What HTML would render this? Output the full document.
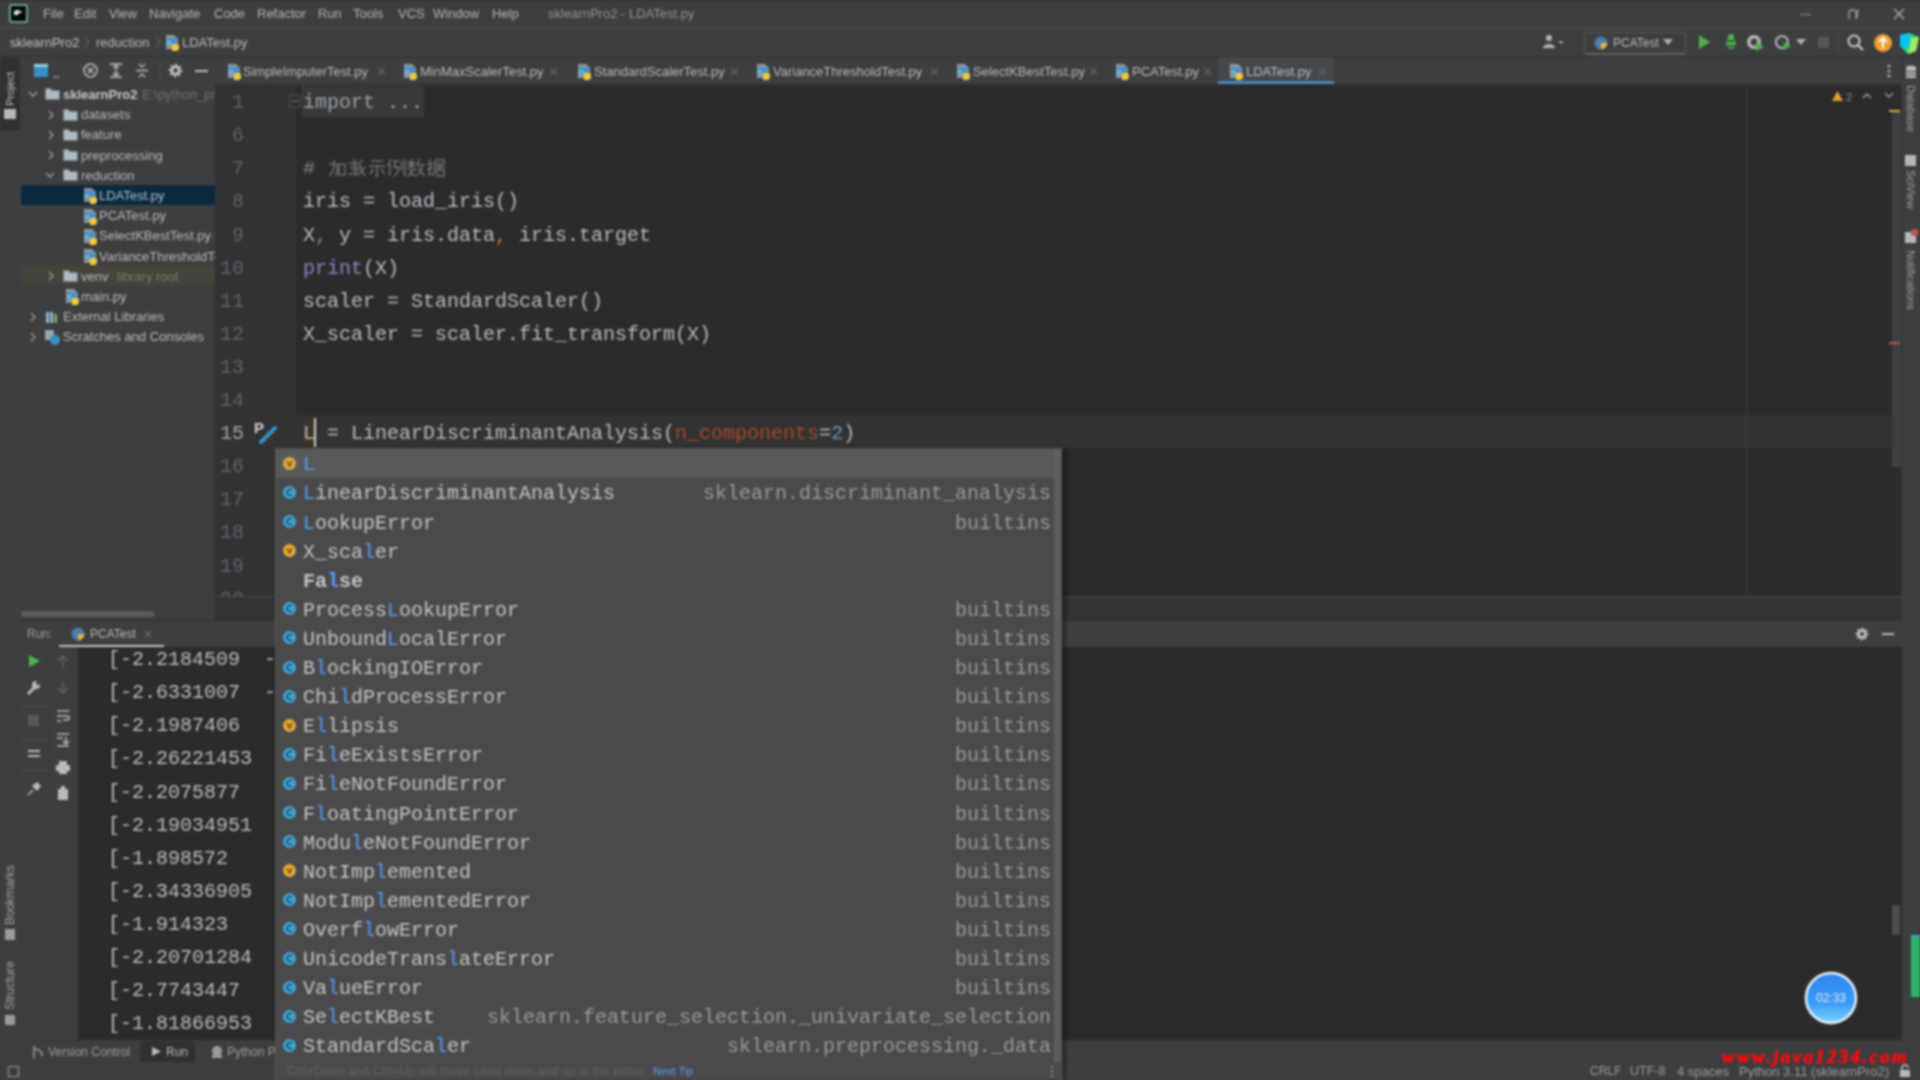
<!DOCTYPE html>
<html><head><meta charset="utf-8">
<style>
*{margin:0;padding:0;box-sizing:border-box}
html,body{width:1920px;height:1080px;overflow:hidden;background:#3d3e40;font-family:"Liberation Sans",sans-serif;color:#bbbbbb}
.a{position:absolute}
.t{white-space:pre}
#root{position:absolute;left:0;top:0;width:1920px;height:1080px;overflow:hidden;filter:blur(0.9px)}
</style></head><body><div id="root">
<div class="a" style="left:0px;top:0px;width:1920px;height:28px;background:#3d3e40;"></div><div class="a" style="left:0px;top:27px;width:1920px;height:2px;background:#48484a;"></div><div class="a" style="left:0px;top:0px;width:1920px;height:1px;background:#2e2e30;"></div><div class="a" style="left:0px;top:29px;width:1920px;height:27px;background:#3d3e40;"></div><div class="a" style="left:0px;top:56px;width:1920px;height:1px;background:#323232;"></div><div class="a" style="left:0px;top:57px;width:20px;height:1005px;background:#3d3e40;"></div><div class="a" style="left:0px;top:57px;width:20px;height:73px;background:#2f3031;"></div><div class="a" style="left:20px;top:57px;width:1px;height:1005px;background:#323232;"></div><div class="a" style="left:20px;top:57px;width:195px;height:563px;background:#3d3e40;"></div><div class="a" style="left:215px;top:57px;width:1687px;height:27px;background:#3d3e40;"></div><div class="a" style="left:215px;top:84px;width:1687px;height:1px;background:#323232;"></div><div class="a" style="left:215px;top:85px;width:81px;height:512px;background:#313234;"></div><div class="a" style="left:296px;top:85px;width:1606px;height:512px;background:#2b2b2b;"></div><div class="a" style="left:215px;top:597px;width:1687px;height:23px;background:#333335;"></div><div class="a" style="left:215px;top:596px;width:1687px;height:1px;background:#4a494d;"></div><div class="a" style="left:1902px;top:57px;width:18px;height:1005px;background:#3d3e40;"></div><div class="a" style="left:1901px;top:57px;width:1px;height:1005px;background:#323232;"></div><div class="a" style="left:20px;top:620px;width:1882px;height:1px;background:#333335;"></div><div class="a" style="left:20px;top:621px;width:1882px;height:26px;background:#3d3e40;"></div><div class="a" style="left:20px;top:647px;width:58px;height:393px;background:#3d3e40;"></div><div class="a" style="left:78px;top:647px;width:1824px;height:393px;background:#2b2b2b;"></div><div class="a" style="left:20px;top:1040px;width:1882px;height:1px;background:#393b3d;"></div><div class="a" style="left:20px;top:1041px;width:1882px;height:21px;background:#3d3e40;"></div><div class="a" style="left:0px;top:1062px;width:1920px;height:1px;background:#393b3d;"></div><div class="a" style="left:0px;top:1063px;width:1920px;height:17px;background:#3d3e40;"></div><!--CONTENT--><svg class="a" style="left:8px;top:3px;" width="21" height="21" viewBox="0 0 21 21"><rect x="2" y="2" width="17" height="17" rx="2" fill="#020a06" stroke="#6aa290" stroke-width="2"/><path d="M6 8q3-2 6 0l2 1-1 1-2 0-1 2-4 0z" fill="#e0e0e0"/></svg><div class="a t" style="left:43px;top:3.7px;line-height:19px;font-size:13px;color:#b4b4b4;font-family:'Liberation Sans',sans-serif;font-weight:400;">File</div><div class="a t" style="left:74px;top:3.7px;line-height:19px;font-size:13px;color:#b4b4b4;font-family:'Liberation Sans',sans-serif;font-weight:400;">Edit</div><div class="a t" style="left:109px;top:3.7px;line-height:19px;font-size:13px;color:#b4b4b4;font-family:'Liberation Sans',sans-serif;font-weight:400;">View</div><div class="a t" style="left:149px;top:3.7px;line-height:19px;font-size:13px;color:#b4b4b4;font-family:'Liberation Sans',sans-serif;font-weight:400;">Navigate</div><div class="a t" style="left:214px;top:3.7px;line-height:19px;font-size:13px;color:#b4b4b4;font-family:'Liberation Sans',sans-serif;font-weight:400;">Code</div><div class="a t" style="left:257px;top:3.7px;line-height:19px;font-size:13px;color:#b4b4b4;font-family:'Liberation Sans',sans-serif;font-weight:400;">Refactor</div><div class="a t" style="left:318px;top:3.7px;line-height:19px;font-size:13px;color:#b4b4b4;font-family:'Liberation Sans',sans-serif;font-weight:400;">Run</div><div class="a t" style="left:353px;top:3.7px;line-height:19px;font-size:13px;color:#b4b4b4;font-family:'Liberation Sans',sans-serif;font-weight:400;">Tools</div><div class="a t" style="left:398px;top:3.7px;line-height:19px;font-size:13px;color:#b4b4b4;font-family:'Liberation Sans',sans-serif;font-weight:400;">VCS</div><div class="a t" style="left:433px;top:3.7px;line-height:19px;font-size:13px;color:#b4b4b4;font-family:'Liberation Sans',sans-serif;font-weight:400;">Window</div><div class="a t" style="left:492px;top:3.7px;line-height:19px;font-size:13px;color:#b4b4b4;font-family:'Liberation Sans',sans-serif;font-weight:400;">Help</div><div class="a t" style="left:548px;top:3.7px;line-height:19px;font-size:13px;color:#949496;font-family:'Liberation Sans',sans-serif;font-weight:400;">sklearnPro2 - LDATest.py</div><div class="a" style="left:1800px;top:14px;width:11px;height:1px;background:#8c8e90;"></div><svg class="a" style="left:1846px;top:7px;" width="16" height="14" viewBox="0 0 16 14"><path d="M3 12V6q0-3 3-3h1q3 0 3 3v6" stroke="#9a9c9e" stroke-width="1.4" fill="none"/><path d="M12 2l-1 9" stroke="#9a9c9e" stroke-width="1.4"/></svg><svg class="a" style="left:1892px;top:7px;" width="14" height="14" viewBox="0 0 14 14"><path d="M2 2l10 10M12 2L2 12" stroke="#b0b2b4" stroke-width="1.4"/></svg><div class="a t" style="left:10px;top:32.5px;line-height:19px;font-size:13px;color:#c4c4c4;font-family:'Liberation Sans',sans-serif;font-weight:400;">sklearnPro2</div><svg class="a" style="left:84px;top:36px;" width="6" height="12" viewBox="0 0 6 12"><path d="M1 1l4 5-4 5" stroke="#6e7072" fill="none"/></svg><div class="a t" style="left:96px;top:32.5px;line-height:19px;font-size:13px;color:#bbbbbb;font-family:'Liberation Sans',sans-serif;font-weight:400;">reduction</div><svg class="a" style="left:155px;top:36px;" width="6" height="12" viewBox="0 0 6 12"><path d="M1 1l4 5-4 5" stroke="#6e7072" fill="none"/></svg><svg class="a" style="left:164px;top:34px;" width="16" height="17" viewBox="0 0 16 17"><path d="M2 1h8l4 4v10H2z" fill="#aeb6bd" opacity="0.75"/><path d="M3 4h7a3 3 0 0 1 3 3v3H6v2H3z" fill="#4a8fd0"/><path d="M3 7h4v4H3z" fill="#6cc0c8" opacity="0.8"/><path d="M8 10h5a2 2 0 0 1 2 2v2a3 3 0 0 1-3 3H8z" fill="#f0c93c"/></svg><div class="a t" style="left:182px;top:32.5px;line-height:19px;font-size:13px;color:#bbbbbb;font-family:'Liberation Sans',sans-serif;font-weight:400;">LDATest.py</div><svg class="a" style="left:1540px;top:33px;" width="24" height="18" viewBox="0 0 24 18"><circle cx="9" cy="5" r="3" fill="#b6b8ba"/><path d="M3 15c0-5 12-5 12 0z" fill="#b6b8ba"/><path d="M18 8l3 3 3-3" fill="#9a9c9e"/></svg><div class="a" style="left:1584px;top:32px;width:102px;height:23px;background:#3d3e40;border:1px solid #555759;border-radius:2px"></div><div class="a" style="left:1586px;top:53px;width:98px;height:2px;background:#5e6062;"></div><svg class="a" style="left:1593px;top:35px;" width="16" height="16" viewBox="0 0 16 16"><circle cx="8" cy="8" r="6.5" fill="#4a7fb0"/><path d="M8 8h6.5A6.5 6.5 0 0 1 8 14.5z" fill="#e0b540"/></svg><div class="a t" style="left:1613px;top:34.0px;line-height:18px;font-size:12px;color:#bbbbbb;font-family:'Liberation Sans',sans-serif;font-weight:400;">PCATest</div><svg class="a" style="left:1663px;top:39px;" width="10" height="6" viewBox="0 0 10 6"><path d="M0 0h10L5 6z" fill="#b0b2b4"/></svg><svg class="a" style="left:1697px;top:34px;" width="14" height="16" viewBox="0 0 14 16"><path d="M2 1l11 7-11 7z" fill="#4fb548"/></svg><svg class="a" style="left:1722px;top:33px;" width="18" height="18" viewBox="0 0 18 18"><ellipse cx="9" cy="10" rx="5" ry="6" fill="#4fb548"/><circle cx="9" cy="4" r="3" fill="#4fb548"/><path d="M2 8h14M2 13h14" stroke="#3d3e40" stroke-width="1.5"/></svg><svg class="a" style="left:1746px;top:33px;" width="20" height="18" viewBox="0 0 20 18"><circle cx="8" cy="9" r="7" fill="#b6b8ba"/><circle cx="8" cy="9" r="3.5" fill="#3d3e40"/><path d="M10 9l8 5-8 4z" fill="#4fb548"/></svg><svg class="a" style="left:1774px;top:33px;" width="18" height="18" viewBox="0 0 18 18"><circle cx="8" cy="9" r="6" stroke="#b6b8ba" stroke-width="2" fill="none"/><path d="M10 9l7 4-7 4z" fill="#4fb548"/></svg><svg class="a" style="left:1796px;top:39px;" width="10" height="6" viewBox="0 0 10 6"><path d="M0 0h10L5 6z" fill="#b0b2b4"/></svg><div class="a" style="left:1818px;top:37px;width:11px;height:11px;background:#55575a;"></div><div class="a" style="left:1838px;top:31px;width:1px;height:24px;background:#4b4d4f;"></div><svg class="a" style="left:1846px;top:33px;" width="20" height="20" viewBox="0 0 20 20"><circle cx="8" cy="8" r="5.5" stroke="#c8cacc" stroke-width="2" fill="none"/><path d="M12 12l5 5" stroke="#c8cacc" stroke-width="2.2"/></svg><svg class="a" style="left:1873px;top:33px;" width="20" height="20" viewBox="0 0 20 20"><circle cx="10" cy="10" r="9" fill="#f0a030"/><path d="M10 5v10M6 9l4-4 4 4" stroke="#fff" stroke-width="2" fill="none"/></svg><svg class="a" style="left:1899px;top:32px;" width="21" height="22" viewBox="0 0 21 22"><path d="M1 3l9-2 10 4-3 14-8 3-7-7z" fill="#21d789"/><path d="M1 3l9-2 2 14-11 0z" fill="#07c3f2"/><path d="M12 6l8-1-3 14-8 3z" fill="#fcf84a" opacity="0.6"/></svg><div class="a t" style="left:4px;top:106px;line-height:12px;font-size:11px;color:#c0c2c4;transform:rotate(-90deg);transform-origin:0 0">Project</div><div class="a" style="left:4px;top:109px;width:12px;height:10px;background:#b6b8ba;"></div><div class="a t" style="left:4px;top:925px;line-height:13px;font-size:12px;color:#a4a4a6;transform:rotate(-90deg);transform-origin:0 0">Bookmarks</div><div class="a" style="left:5px;top:929px;width:10px;height:11px;background:#9a9c9e;"></div><div class="a t" style="left:4px;top:1010px;line-height:13px;font-size:12px;color:#a4a4a6;transform:rotate(-90deg);transform-origin:0 0">Structure</div><div class="a" style="left:5px;top:1015px;width:10px;height:10px;background:#9a9c9e;"></div><div class="a" style="left:8px;top:1066px;width:11px;height:11px;background:#3d3e40;border:1px solid #9a9c9e"></div><svg class="a" style="left:33px;top:63px;" width="16" height="16" viewBox="0 0 16 16"><rect x="1" y="1" width="14" height="13" fill="#3592c4"/><rect x="1" y="1" width="14" height="3" fill="#9fcfe8"/></svg><div class="a t" style="left:53px;top:65.0px;line-height:18px;font-size:12px;color:#a0a2a4;font-family:'Liberation Sans',sans-serif;font-weight:700;">..</div><svg class="a" style="left:82px;top:62px;" width="17" height="17" viewBox="0 0 17 17"><circle cx="8.5" cy="8.5" r="6.5" stroke="#b9bbbd" stroke-width="1.6" fill="none"/><path d="M5.5 5.5l6 6M11.5 5.5l-6 6" stroke="#b9bbbd" stroke-width="1.6"/></svg><svg class="a" style="left:108px;top:62px;" width="16" height="17" viewBox="0 0 16 17"><path d="M2 2h12M2 15h12" stroke="#b9bbbd" stroke-width="1.6"/><path d="M5 6l3-3 3 3M5 11l3 3 3-3M8 4v10" stroke="#b9bbbd" stroke-width="1.4" fill="none"/></svg><svg class="a" style="left:134px;top:62px;" width="16" height="17" viewBox="0 0 16 17"><path d="M2 8.5h12" stroke="#b9bbbd" stroke-width="1.6"/><path d="M5 2l3 3 3-3M5 15l3-3 3 3" stroke="#b9bbbd" stroke-width="1.4" fill="none"/></svg><div class="a" style="left:160px;top:62px;width:1px;height:18px;background:#4b4d4f;"></div><svg class="a" style="left:167px;top:62px;" width="17" height="17" viewBox="0 0 17 17"><polygon points="15.50,8.50 15.37,9.87 13.12,10.41 12.66,11.28 13.45,13.45 12.39,14.32 10.41,13.12 9.48,13.40 8.50,15.50 7.13,15.37 6.59,13.12 5.72,12.66 3.55,13.45 2.68,12.39 3.88,10.41 3.60,9.48 1.50,8.50 1.63,7.13 3.88,6.59 4.34,5.72 3.55,3.55 4.61,2.68 6.59,3.88 7.52,3.60 8.50,1.50 9.87,1.63 10.41,3.88 11.28,4.34 13.45,3.55 14.32,4.61 13.12,6.59 13.40,7.52" fill="#b9bbbd"/><circle cx="8.5" cy="8.5" r="2.2" fill="#3d3e40"/></svg><div class="a" style="left:195px;top:70px;width:13px;height:2px;background:#b9bbbd;"></div><div class="a" style="left:0;top:0;width:215px;height:620px;overflow:hidden"><div class="a" style="left:21px;top:185px;width:194px;height:20px;background:#0d293e;"></div><div class="a" style="left:21px;top:265px;width:194px;height:20px;background:#45433a;"></div><svg class="a" style="left:28px;top:90.4px;" width="10" height="8" viewBox="0 0 10 8"><path d="M1 2l4 4 4-4" stroke="#9da0a2" stroke-width="1.3" fill="none"/></svg><svg class="a" style="left:45px;top:87.4px;" width="15" height="13" viewBox="0 0 15 13"><path d="M0.5 1.5h5l1.5 2h7.5v9h-14z" fill="#aeb9c0"/></svg><div class="a t" style="left:63px;top:84.9px;line-height:19px;font-size:13px;color:#c8c8c8;font-family:'Liberation Sans',sans-serif;font-weight:700;">sklearnPro2</div><div class="a t" style="left:142px;top:84.9px;line-height:19px;font-size:13px;color:#6e7072;font-family:'Liberation Sans',sans-serif;font-weight:400;">E:\python_pro</div><svg class="a" style="left:47px;top:109.60000000000001px;" width="8" height="10" viewBox="0 0 8 10"><path d="M2 1l4 4-4 4" stroke="#9da0a2" stroke-width="1.3" fill="none"/></svg><svg class="a" style="left:63px;top:107.60000000000001px;" width="15" height="13" viewBox="0 0 15 13"><path d="M0.5 1.5h5l1.5 2h7.5v9h-14z" fill="#aeb9c0"/></svg><div class="a t" style="left:81px;top:105.1px;line-height:19px;font-size:13px;color:#bbbbbb;font-family:'Liberation Sans',sans-serif;font-weight:400;">datasets</div><svg class="a" style="left:47px;top:129.8px;" width="8" height="10" viewBox="0 0 8 10"><path d="M2 1l4 4-4 4" stroke="#9da0a2" stroke-width="1.3" fill="none"/></svg><svg class="a" style="left:63px;top:127.80000000000001px;" width="15" height="13" viewBox="0 0 15 13"><path d="M0.5 1.5h5l1.5 2h7.5v9h-14z" fill="#aeb9c0"/></svg><div class="a t" style="left:81px;top:125.3px;line-height:19px;font-size:13px;color:#bbbbbb;font-family:'Liberation Sans',sans-serif;font-weight:400;">feature</div><svg class="a" style="left:47px;top:150.0px;" width="8" height="10" viewBox="0 0 8 10"><path d="M2 1l4 4-4 4" stroke="#9da0a2" stroke-width="1.3" fill="none"/></svg><svg class="a" style="left:63px;top:148.0px;" width="15" height="13" viewBox="0 0 15 13"><path d="M0.5 1.5h5l1.5 2h7.5v9h-14z" fill="#aeb9c0"/></svg><div class="a t" style="left:81px;top:145.5px;line-height:19px;font-size:13px;color:#bbbbbb;font-family:'Liberation Sans',sans-serif;font-weight:400;">preprocessing</div><svg class="a" style="left:45px;top:171.2px;" width="10" height="8" viewBox="0 0 10 8"><path d="M1 2l4 4 4-4" stroke="#9da0a2" stroke-width="1.3" fill="none"/></svg><svg class="a" style="left:63px;top:168.2px;" width="15" height="13" viewBox="0 0 15 13"><path d="M0.5 1.5h5l1.5 2h7.5v9h-14z" fill="#aeb9c0"/></svg><div class="a t" style="left:81px;top:165.7px;line-height:19px;font-size:13px;color:#bbbbbb;font-family:'Liberation Sans',sans-serif;font-weight:400;">reduction</div><svg class="a" style="left:82px;top:187.4px;" width="16" height="17" viewBox="0 0 16 17"><path d="M2 1h8l4 4v10H2z" fill="#aeb6bd" opacity="0.75"/><path d="M3 4h7a3 3 0 0 1 3 3v3H6v2H3z" fill="#4a8fd0"/><path d="M3 7h4v4H3z" fill="#6cc0c8" opacity="0.8"/><path d="M8 10h5a2 2 0 0 1 2 2v2a3 3 0 0 1-3 3H8z" fill="#f0c93c"/></svg><div class="a t" style="left:99px;top:185.9px;line-height:19px;font-size:13px;color:#a9c1d6;font-family:'Liberation Sans',sans-serif;font-weight:400;">LDATest.py</div><svg class="a" style="left:82px;top:207.6px;" width="16" height="17" viewBox="0 0 16 17"><path d="M2 1h8l4 4v10H2z" fill="#aeb6bd" opacity="0.75"/><path d="M3 4h7a3 3 0 0 1 3 3v3H6v2H3z" fill="#4a8fd0"/><path d="M3 7h4v4H3z" fill="#6cc0c8" opacity="0.8"/><path d="M8 10h5a2 2 0 0 1 2 2v2a3 3 0 0 1-3 3H8z" fill="#f0c93c"/></svg><div class="a t" style="left:99px;top:206.1px;line-height:19px;font-size:13px;color:#bbbbbb;font-family:'Liberation Sans',sans-serif;font-weight:400;">PCATest.py</div><svg class="a" style="left:82px;top:227.8px;" width="16" height="17" viewBox="0 0 16 17"><path d="M2 1h8l4 4v10H2z" fill="#aeb6bd" opacity="0.75"/><path d="M3 4h7a3 3 0 0 1 3 3v3H6v2H3z" fill="#4a8fd0"/><path d="M3 7h4v4H3z" fill="#6cc0c8" opacity="0.8"/><path d="M8 10h5a2 2 0 0 1 2 2v2a3 3 0 0 1-3 3H8z" fill="#f0c93c"/></svg><div class="a t" style="left:99px;top:226.3px;line-height:19px;font-size:13px;color:#bbbbbb;font-family:'Liberation Sans',sans-serif;font-weight:400;">SelectKBestTest.py</div><svg class="a" style="left:82px;top:248.0px;" width="16" height="17" viewBox="0 0 16 17"><path d="M2 1h8l4 4v10H2z" fill="#aeb6bd" opacity="0.75"/><path d="M3 4h7a3 3 0 0 1 3 3v3H6v2H3z" fill="#4a8fd0"/><path d="M3 7h4v4H3z" fill="#6cc0c8" opacity="0.8"/><path d="M8 10h5a2 2 0 0 1 2 2v2a3 3 0 0 1-3 3H8z" fill="#f0c93c"/></svg><div class="a t" style="left:99px;top:246.5px;line-height:19px;font-size:13px;color:#bbbbbb;font-family:'Liberation Sans',sans-serif;font-weight:400;">VarianceThresholdTest.py</div><svg class="a" style="left:47px;top:271.2px;" width="8" height="10" viewBox="0 0 8 10"><path d="M2 1l4 4-4 4" stroke="#9da0a2" stroke-width="1.3" fill="none"/></svg><svg class="a" style="left:63px;top:269.2px;" width="15" height="13" viewBox="0 0 15 13"><path d="M0.5 1.5h5l1.5 2h7.5v9h-14z" fill="#aeb9c0"/></svg><div class="a t" style="left:81px;top:266.7px;line-height:19px;font-size:13px;color:#bbbbbb;font-family:'Liberation Sans',sans-serif;font-weight:400;">venv</div><div class="a t" style="left:117px;top:266.7px;line-height:19px;font-size:13px;color:#7e7b6c;font-family:'Liberation Sans',sans-serif;font-weight:400;">library root</div><svg class="a" style="left:64px;top:288.4px;" width="16" height="17" viewBox="0 0 16 17"><path d="M2 1h8l4 4v10H2z" fill="#aeb6bd" opacity="0.75"/><path d="M3 4h7a3 3 0 0 1 3 3v3H6v2H3z" fill="#4a8fd0"/><path d="M3 7h4v4H3z" fill="#6cc0c8" opacity="0.8"/><path d="M8 10h5a2 2 0 0 1 2 2v2a3 3 0 0 1-3 3H8z" fill="#f0c93c"/></svg><div class="a t" style="left:81px;top:286.9px;line-height:19px;font-size:13px;color:#bbbbbb;font-family:'Liberation Sans',sans-serif;font-weight:400;">main.py</div><svg class="a" style="left:29px;top:311.6px;" width="8" height="10" viewBox="0 0 8 10"><path d="M2 1l4 4-4 4" stroke="#9da0a2" stroke-width="1.3" fill="none"/></svg><svg class="a" style="left:45px;top:309.6px;" width="14" height="14" viewBox="0 0 14 14"><rect x="1" y="2" width="3" height="11" fill="#8fb5c9"/><rect x="5" y="2" width="3" height="11" fill="#8fb5c9"/><rect x="9" y="4" width="3" height="9" fill="#7fa36b"/></svg><div class="a t" style="left:63px;top:307.1px;line-height:19px;font-size:13px;color:#bbbbbb;font-family:'Liberation Sans',sans-serif;font-weight:400;">External Libraries</div><svg class="a" style="left:29px;top:331.79999999999995px;" width="8" height="10" viewBox="0 0 8 10"><path d="M2 1l4 4-4 4" stroke="#9da0a2" stroke-width="1.3" fill="none"/></svg><svg class="a" style="left:44px;top:328.79999999999995px;" width="17" height="17" viewBox="0 0 17 17"><rect x="1" y="1" width="9" height="10" fill="#9aa7b0"/><circle cx="11" cy="11" r="5" fill="#3592c4"/></svg><div class="a t" style="left:63px;top:327.3px;line-height:19px;font-size:13px;color:#bbbbbb;font-family:'Liberation Sans',sans-serif;font-weight:400;">Scratches and Consoles</div><div class="a" style="left:21px;top:611px;width:133px;height:6px;background:#5a5c5e;border-radius:3px"></div></div><div class="a" style="left:1218px;top:57px;width:116px;height:27px;background:#45484a;"></div><div class="a" style="left:1218px;top:81px;width:116px;height:3px;background:#4a88c7;"></div><svg class="a" style="left:226px;top:63px;" width="16" height="17" viewBox="0 0 16 17"><path d="M2 1h8l4 4v10H2z" fill="#aeb6bd" opacity="0.75"/><path d="M3 4h7a3 3 0 0 1 3 3v3H6v2H3z" fill="#4a8fd0"/><path d="M3 7h4v4H3z" fill="#6cc0c8" opacity="0.8"/><path d="M8 10h5a2 2 0 0 1 2 2v2a3 3 0 0 1-3 3H8z" fill="#f0c93c"/></svg><div class="a t" style="left:243px;top:61.5px;line-height:19px;font-size:13px;color:#bbbbbb;font-family:'Liberation Sans',sans-serif;font-weight:400;">SimpleImputerTest.py</div><svg class="a" style="left:377px;top:67px;" width="9" height="9" viewBox="0 0 9 9"><path d="M1 1l7 7M8 1L1 8" stroke="#5e6062" stroke-width="1.2"/></svg><svg class="a" style="left:402px;top:63px;" width="16" height="17" viewBox="0 0 16 17"><path d="M2 1h8l4 4v10H2z" fill="#aeb6bd" opacity="0.75"/><path d="M3 4h7a3 3 0 0 1 3 3v3H6v2H3z" fill="#4a8fd0"/><path d="M3 7h4v4H3z" fill="#6cc0c8" opacity="0.8"/><path d="M8 10h5a2 2 0 0 1 2 2v2a3 3 0 0 1-3 3H8z" fill="#f0c93c"/></svg><div class="a t" style="left:420px;top:61.5px;line-height:19px;font-size:13px;color:#bbbbbb;font-family:'Liberation Sans',sans-serif;font-weight:400;">MinMaxScalerTest.py</div><svg class="a" style="left:549px;top:67px;" width="9" height="9" viewBox="0 0 9 9"><path d="M1 1l7 7M8 1L1 8" stroke="#5e6062" stroke-width="1.2"/></svg><svg class="a" style="left:576px;top:63px;" width="16" height="17" viewBox="0 0 16 17"><path d="M2 1h8l4 4v10H2z" fill="#aeb6bd" opacity="0.75"/><path d="M3 4h7a3 3 0 0 1 3 3v3H6v2H3z" fill="#4a8fd0"/><path d="M3 7h4v4H3z" fill="#6cc0c8" opacity="0.8"/><path d="M8 10h5a2 2 0 0 1 2 2v2a3 3 0 0 1-3 3H8z" fill="#f0c93c"/></svg><div class="a t" style="left:594px;top:61.5px;line-height:19px;font-size:13px;color:#bbbbbb;font-family:'Liberation Sans',sans-serif;font-weight:400;">StandardScalerTest.py</div><svg class="a" style="left:730px;top:67px;" width="9" height="9" viewBox="0 0 9 9"><path d="M1 1l7 7M8 1L1 8" stroke="#5e6062" stroke-width="1.2"/></svg><svg class="a" style="left:755px;top:63px;" width="16" height="17" viewBox="0 0 16 17"><path d="M2 1h8l4 4v10H2z" fill="#aeb6bd" opacity="0.75"/><path d="M3 4h7a3 3 0 0 1 3 3v3H6v2H3z" fill="#4a8fd0"/><path d="M3 7h4v4H3z" fill="#6cc0c8" opacity="0.8"/><path d="M8 10h5a2 2 0 0 1 2 2v2a3 3 0 0 1-3 3H8z" fill="#f0c93c"/></svg><div class="a t" style="left:773px;top:61.5px;line-height:19px;font-size:13px;color:#bbbbbb;font-family:'Liberation Sans',sans-serif;font-weight:400;">VarianceThresholdTest.py</div><svg class="a" style="left:930px;top:67px;" width="9" height="9" viewBox="0 0 9 9"><path d="M1 1l7 7M8 1L1 8" stroke="#5e6062" stroke-width="1.2"/></svg><svg class="a" style="left:955px;top:63px;" width="16" height="17" viewBox="0 0 16 17"><path d="M2 1h8l4 4v10H2z" fill="#aeb6bd" opacity="0.75"/><path d="M3 4h7a3 3 0 0 1 3 3v3H6v2H3z" fill="#4a8fd0"/><path d="M3 7h4v4H3z" fill="#6cc0c8" opacity="0.8"/><path d="M8 10h5a2 2 0 0 1 2 2v2a3 3 0 0 1-3 3H8z" fill="#f0c93c"/></svg><div class="a t" style="left:973px;top:61.5px;line-height:19px;font-size:13px;color:#bbbbbb;font-family:'Liberation Sans',sans-serif;font-weight:400;">SelectKBestTest.py</div><svg class="a" style="left:1089px;top:67px;" width="9" height="9" viewBox="0 0 9 9"><path d="M1 1l7 7M8 1L1 8" stroke="#5e6062" stroke-width="1.2"/></svg><svg class="a" style="left:1114px;top:63px;" width="16" height="17" viewBox="0 0 16 17"><path d="M2 1h8l4 4v10H2z" fill="#aeb6bd" opacity="0.75"/><path d="M3 4h7a3 3 0 0 1 3 3v3H6v2H3z" fill="#4a8fd0"/><path d="M3 7h4v4H3z" fill="#6cc0c8" opacity="0.8"/><path d="M8 10h5a2 2 0 0 1 2 2v2a3 3 0 0 1-3 3H8z" fill="#f0c93c"/></svg><div class="a t" style="left:1132px;top:61.5px;line-height:19px;font-size:13px;color:#bbbbbb;font-family:'Liberation Sans',sans-serif;font-weight:400;">PCATest.py</div><svg class="a" style="left:1203px;top:67px;" width="9" height="9" viewBox="0 0 9 9"><path d="M1 1l7 7M8 1L1 8" stroke="#5e6062" stroke-width="1.2"/></svg><svg class="a" style="left:1228px;top:63px;" width="16" height="17" viewBox="0 0 16 17"><path d="M2 1h8l4 4v10H2z" fill="#aeb6bd" opacity="0.75"/><path d="M3 4h7a3 3 0 0 1 3 3v3H6v2H3z" fill="#4a8fd0"/><path d="M3 7h4v4H3z" fill="#6cc0c8" opacity="0.8"/><path d="M8 10h5a2 2 0 0 1 2 2v2a3 3 0 0 1-3 3H8z" fill="#f0c93c"/></svg><div class="a t" style="left:1246px;top:61.5px;line-height:19px;font-size:13px;color:#bbbbbb;font-family:'Liberation Sans',sans-serif;font-weight:400;">LDATest.py</div><svg class="a" style="left:1318px;top:67px;" width="9" height="9" viewBox="0 0 9 9"><path d="M1 1l7 7M8 1L1 8" stroke="#5e6062" stroke-width="1.2"/></svg><svg class="a" style="left:1886px;top:63px;" width="6" height="16" viewBox="0 0 6 16"><circle cx="3" cy="3" r="1.5" fill="#b0b2b4"/><circle cx="3" cy="8" r="1.5" fill="#b0b2b4"/><circle cx="3" cy="13" r="1.5" fill="#b0b2b4"/></svg><div class="a" style="left:296px;top:415.0px;width:1596px;height:33.1px;background:#323232;"></div><div class="a" style="left:1746px;top:85px;width:1px;height:512px;background:#3a3a3a;"></div><div class="a" style="left:0;top:0;width:1920px;height:597px;overflow:hidden"><div class="a t" style="right:1676px;top:88.0px;line-height:30px;font-size:20px;color:#606366;font-family:'Liberation Mono',monospace;font-weight:400;text-align:right;">1</div><div class="a t" style="right:1676px;top:121.2px;line-height:30px;font-size:20px;color:#606366;font-family:'Liberation Mono',monospace;font-weight:400;text-align:right;">6</div><div class="a t" style="right:1676px;top:154.2px;line-height:30px;font-size:20px;color:#606366;font-family:'Liberation Mono',monospace;font-weight:400;text-align:right;">7</div><div class="a t" style="right:1676px;top:187.4px;line-height:30px;font-size:20px;color:#606366;font-family:'Liberation Mono',monospace;font-weight:400;text-align:right;">8</div><div class="a t" style="right:1676px;top:220.5px;line-height:30px;font-size:20px;color:#606366;font-family:'Liberation Mono',monospace;font-weight:400;text-align:right;">9</div><div class="a t" style="right:1676px;top:253.6px;line-height:30px;font-size:20px;color:#606366;font-family:'Liberation Mono',monospace;font-weight:400;text-align:right;">10</div><div class="a t" style="right:1676px;top:286.7px;line-height:30px;font-size:20px;color:#606366;font-family:'Liberation Mono',monospace;font-weight:400;text-align:right;">11</div><div class="a t" style="right:1676px;top:319.8px;line-height:30px;font-size:20px;color:#606366;font-family:'Liberation Mono',monospace;font-weight:400;text-align:right;">12</div><div class="a t" style="right:1676px;top:352.9px;line-height:30px;font-size:20px;color:#606366;font-family:'Liberation Mono',monospace;font-weight:400;text-align:right;">13</div><div class="a t" style="right:1676px;top:386.0px;line-height:30px;font-size:20px;color:#606366;font-family:'Liberation Mono',monospace;font-weight:400;text-align:right;">14</div><div class="a t" style="right:1676px;top:419.1px;line-height:30px;font-size:20px;color:#a4a3a3;font-family:'Liberation Mono',monospace;font-weight:400;text-align:right;">15</div><div class="a t" style="right:1676px;top:452.2px;line-height:30px;font-size:20px;color:#606366;font-family:'Liberation Mono',monospace;font-weight:400;text-align:right;">16</div><div class="a t" style="right:1676px;top:485.3px;line-height:30px;font-size:20px;color:#606366;font-family:'Liberation Mono',monospace;font-weight:400;text-align:right;">17</div><div class="a t" style="right:1676px;top:518.3px;line-height:30px;font-size:20px;color:#606366;font-family:'Liberation Mono',monospace;font-weight:400;text-align:right;">18</div><div class="a t" style="right:1676px;top:551.5px;line-height:30px;font-size:20px;color:#606366;font-family:'Liberation Mono',monospace;font-weight:400;text-align:right;">19</div><div class="a t" style="right:1676px;top:584.5px;line-height:30px;font-size:20px;color:#606366;font-family:'Liberation Mono',monospace;font-weight:400;text-align:right;">20</div></div><svg class="a" style="left:289px;top:94px;" width="12" height="14" viewBox="0 0 12 14"><rect x="1" y="1" width="10" height="12" fill="#2b2b2b" stroke="#555" /><path d="M3 7h6" stroke="#888"/></svg><div class="a" style="left:302px;top:85px;width:122px;height:32px;background:#393939;"></div><div class="a t" style="left:303px;top:88.0px;line-height:30px;font-size:20px;color:#b6bdc4;font-family:'Liberation Mono',monospace;font-weight:400;"><span style="color:#9da3a8">import ...</span></div><div class="a t" style="left:303px;top:154.2px;line-height:30px;font-size:20px;color:#b6bdc4;font-family:'Liberation Mono',monospace;font-weight:400;"><span style="color:#808080"># </span></div><svg class="a" style="left:328px;top:157px;" width="120" height="22" viewBox="0 0 120 22"><g transform="translate(0.0,1)"><path d="M1 6h8M6 2v5q0 7-5 11M9 6v7q0 4-2 4M11 6h6v11h-6zM11 17h6" stroke="#707070" stroke-width="1.5" fill="none"/></g><g transform="translate(19.6,1)"><path d="M1 5h12M7 1v8M2 9h10M4 12h8M8 9v9M1 16h11M13 2l2 2M12 5q1 8 6 13M17 9l-6 8" stroke="#707070" stroke-width="1.5" fill="none"/></g><g transform="translate(39.2,1)"><path d="M4 3h12M2 8h16M10 8v10l-2-1M6 11l-3 5M14 11l3 5" stroke="#707070" stroke-width="1.5" fill="none"/></g><g transform="translate(58.8,1)"><path d="M4 1l-3 7M3 6v12M6 3h7M9 3l-2 6h5q0 6-5 9M9 9l3 3M15 3v10M18 1v16l-2-1" stroke="#707070" stroke-width="1.5" fill="none"/></g><g transform="translate(78.4,1)"><path d="M2 3l2 2M8 3l-2 2M1 6h9M5 1v9M1 10l4-3 4 3M2 12h8M6 12q-1 4-5 6M4 15l5 3M13 1l-2 6h7M16 7q-1 7-6 11M12 10l6 8" stroke="#707070" stroke-width="1.5" fill="none"/></g><g transform="translate(98.0,1)"><path d="M1 6h6M4 1v16l-2-1M1 12l6-3M9 2h9v4h-9M9 2v8q0 5-3 8M9 9h10M14 6v6M11 12h7v6h-7z" stroke="#707070" stroke-width="1.5" fill="none"/></g></svg><div class="a t" style="left:303px;top:187.4px;line-height:30px;font-size:20px;color:#b6bdc4;font-family:'Liberation Mono',monospace;font-weight:400;"><span style="color:#b6bdc4">iris = load_iris()</span></div><div class="a t" style="left:303px;top:220.5px;line-height:30px;font-size:20px;color:#b6bdc4;font-family:'Liberation Mono',monospace;font-weight:400;"><span style="color:#b6bdc4">X</span><span style="color:#cc7832">,</span><span style="color:#b6bdc4"> y = iris.data</span><span style="color:#cc7832">,</span><span style="color:#b6bdc4"> iris.target</span></div><div class="a t" style="left:303px;top:253.6px;line-height:30px;font-size:20px;color:#b6bdc4;font-family:'Liberation Mono',monospace;font-weight:400;"><span style="color:#8888c6">print</span><span style="color:#b6bdc4">(X)</span></div><div class="a t" style="left:303px;top:286.7px;line-height:30px;font-size:20px;color:#b6bdc4;font-family:'Liberation Mono',monospace;font-weight:400;"><span style="color:#b6bdc4">scaler = StandardScaler()</span></div><div class="a t" style="left:303px;top:319.8px;line-height:30px;font-size:20px;color:#b6bdc4;font-family:'Liberation Mono',monospace;font-weight:400;"><span style="color:#b6bdc4">X_scaler = scaler.fit_transform(X)</span></div><div class="a" style="left:303px;top:418.0px;width:12px;height:29.1px;background:#3b3428;"></div><div class="a t" style="left:303px;top:419.1px;line-height:30px;font-size:20px;color:#b6bdc4;font-family:'Liberation Mono',monospace;font-weight:400;"><span style="color:#b6bdc4">L</span><span style="color:#b6bdc4"> = LinearDiscriminantAnalysis(</span><span style="color:#aa4926">n_components</span><span style="color:#b6bdc4">=</span><span style="color:#6897bb">2</span><span style="color:#b6bdc4">)</span></div><div class="a" style="left:314px;top:418px;width:2px;height:29px;background:#d0d0d0;"></div><div class="a t" style="left:254px;top:417.0px;line-height:22px;font-size:15px;color:#d0d0d0;font-family:'Liberation Sans',sans-serif;font-weight:700;">P</div><svg class="a" style="left:258px;top:424px;" width="20" height="22" viewBox="0 0 20 22"><path d="M3 18l14-14" stroke="#3592c4" stroke-width="4" stroke-linecap="round"/></svg><svg class="a" style="left:1831px;top:90px;" width="13" height="12" viewBox="0 0 13 12"><path d="M6.5 1L12 11H1z" fill="#e0a030"/></svg><div class="a t" style="left:1846px;top:89.0px;line-height:16px;font-size:11px;color:#8c8e90;font-family:'Liberation Sans',sans-serif;font-weight:400;">2</div><svg class="a" style="left:1862px;top:92px;" width="10" height="7" viewBox="0 0 10 7"><path d="M1 6l4-4 4 4" stroke="#a0a2a4" stroke-width="1.3" fill="none"/></svg><svg class="a" style="left:1884px;top:92px;" width="10" height="7" viewBox="0 0 10 7"><path d="M1 1l4 4 4-4" stroke="#a0a2a4" stroke-width="1.3" fill="none"/></svg><div class="a" style="left:1892px;top:112px;width:9px;height:355px;background:#3e3f41;"></div><div class="a" style="left:1889px;top:110px;width:11px;height:2px;background:#e0b030;"></div><div class="a" style="left:1889px;top:342px;width:11px;height:2px;background:#c75450;"></div><svg class="a" style="left:1905px;top:65px;" width="12" height="13" viewBox="0 0 12 13"><ellipse cx="6" cy="2.5" rx="5" ry="2" fill="#b6b8ba"/><rect x="1" y="3" width="10" height="3" fill="#b6b8ba"/><rect x="1" y="7" width="10" height="2.5" fill="#b6b8ba"/><rect x="1" y="10.5" width="10" height="2.5" fill="#b6b8ba"/></svg><div class="a t" style="left:1917px;top:85px;line-height:13px;font-size:11px;color:#a0a2a4;transform:rotate(90deg);transform-origin:0 0">Database</div><div class="a" style="left:1905px;top:155px;width:11px;height:11px;background:#b6b8ba;"></div><div class="a t" style="left:1917px;top:170px;line-height:13px;font-size:11px;color:#a0a2a4;transform:rotate(90deg);transform-origin:0 0">SciView</div><div class="a" style="left:1905px;top:232px;width:11px;height:11px;background:#b6b8ba;"></div><div class="a" style="left:1911px;top:229px;width:7px;height:7px;background:#c75450;border-radius:50%"></div><div class="a t" style="left:1917px;top:250px;line-height:13px;font-size:11px;color:#a0a2a4;transform:rotate(90deg);transform-origin:0 0">Notifications</div><div class="a" style="left:1911px;top:935px;width:9px;height:62px;background:#2fb36a;border-top:2px solid #3aa0d0"></div><div class="a t" style="left:27px;top:625.0px;line-height:18px;font-size:12px;color:#9a9c9e;font-family:'Liberation Sans',sans-serif;font-weight:400;">Run:</div><svg class="a" style="left:70px;top:626px;" width="16" height="16" viewBox="0 0 16 16"><circle cx="8" cy="8" r="6.5" fill="#4a7fb0"/><path d="M8 8h6.5A6.5 6.5 0 0 1 8 14.5z" fill="#e0b540"/></svg><div class="a t" style="left:90px;top:625.0px;line-height:18px;font-size:12px;color:#bbbbbb;font-family:'Liberation Sans',sans-serif;font-weight:400;">PCATest</div><svg class="a" style="left:144px;top:630px;" width="8" height="8" viewBox="0 0 8 8"><path d="M1 1l6 6M7 1L1 7" stroke="#6e7072" stroke-width="1.1"/></svg><div class="a" style="left:59px;top:645px;width:105px;height:2px;background:#bfc1c3;"></div><svg class="a" style="left:1854px;top:626px;" width="16" height="16" viewBox="0 0 16 16"><polygon points="14.50,8.00 14.38,9.27 12.43,9.84 11.99,10.67 12.60,12.60 11.61,13.40 9.84,12.43 8.94,12.71 8.00,14.50 6.73,14.38 6.16,12.43 5.33,11.99 3.40,12.60 2.60,11.61 3.57,9.84 3.29,8.94 1.50,8.00 1.62,6.73 3.57,6.16 4.01,5.33 3.40,3.40 4.39,2.60 6.16,3.57 7.06,3.29 8.00,1.50 9.27,1.62 9.84,3.57 10.67,4.01 12.60,3.40 13.40,4.39 12.43,6.16 12.71,7.06" fill="#b9bbbd"/><circle cx="8" cy="8" r="2" fill="#3d3e40"/></svg><div class="a" style="left:1882px;top:633px;width:12px;height:2px;background:#b9bbbd;"></div><svg class="a" style="left:26px;top:653px;" width="16" height="16" viewBox="0 0 16 16"><path d="M3 2l11 6-11 6z" fill="#4fb548"/></svg><svg class="a" style="left:25px;top:680px;" width="17" height="17" viewBox="0 0 17 17"><path d="M3 14l7-7" stroke="#b9bbbd" stroke-width="3"/><circle cx="11" cy="5" r="4" fill="#b9bbbd"/><circle cx="13" cy="3" r="2" fill="#3d3e40"/></svg><div class="a" style="left:28px;top:715px;width:11px;height:11px;background:#55575a;"></div><div class="a" style="left:28px;top:750px;width:12px;height:2px;background:#b9bbbd;"></div><div class="a" style="left:28px;top:755px;width:12px;height:2px;background:#b9bbbd;"></div><svg class="a" style="left:25px;top:780px;" width="17" height="17" viewBox="0 0 17 17"><path d="M3 15l5-5" stroke="#b9bbbd" stroke-width="1.6"/><path d="M7 6l5-4 4 4-4 5z" fill="#b9bbbd"/></svg><div class="a" style="left:20px;top:706px;width:27px;height:1px;background:#4b4d4f;"></div><div class="a" style="left:20px;top:740px;width:27px;height:1px;background:#4b4d4f;"></div><div class="a" style="left:20px;top:770px;width:27px;height:1px;background:#4b4d4f;"></div><div class="a" style="left:48px;top:647px;width:1px;height:393px;background:#393b3d;"></div><svg class="a" style="left:56px;top:654px;" width="14" height="14" viewBox="0 0 14 14"><path d="M7 2v11M2 7l5-5 5 5" stroke="#5e6062" stroke-width="1.6" fill="none"/></svg><svg class="a" style="left:56px;top:681px;" width="14" height="14" viewBox="0 0 14 14"><path d="M7 1v11M2 7l5 5 5-5" stroke="#5e6062" stroke-width="1.6" fill="none"/></svg><svg class="a" style="left:55px;top:708px;" width="16" height="16" viewBox="0 0 16 16"><path d="M2 3h12M2 8h10a2 2 0 0 1 0 4H8M2 13h4" stroke="#b9bbbd" stroke-width="1.5" fill="none"/></svg><svg class="a" style="left:55px;top:732px;" width="16" height="16" viewBox="0 0 16 16"><path d="M2 2h12M2 6h6M2 14h12M11 5v7M8 9l3 3 3-3" stroke="#b9bbbd" stroke-width="1.5" fill="none"/></svg><svg class="a" style="left:55px;top:759px;" width="16" height="16" viewBox="0 0 16 16"><rect x="1" y="6" width="14" height="6" fill="#b9bbbd"/><rect x="4" y="2" width="8" height="4" fill="#b9bbbd"/><rect x="4" y="11" width="8" height="4" fill="#b9bbbd"/></svg><svg class="a" style="left:56px;top:785px;" width="14" height="16" viewBox="0 0 14 16"><rect x="2" y="4" width="10" height="11" fill="#b9bbbd"/><rect x="5" y="1" width="4" height="3" fill="#b9bbbd"/></svg><div class="a t" style="left:108px;top:645.3px;line-height:30px;font-size:20px;color:#bbbbbb;font-family:'Liberation Mono',monospace;font-weight:400;">[-2.2184509  -</div><div class="a t" style="left:108px;top:678.3px;line-height:30px;font-size:20px;color:#bbbbbb;font-family:'Liberation Mono',monospace;font-weight:400;">[-2.6331007  -</div><div class="a t" style="left:108px;top:711.4px;line-height:30px;font-size:20px;color:#bbbbbb;font-family:'Liberation Mono',monospace;font-weight:400;">[-2.1987406</div><div class="a t" style="left:108px;top:744.4px;line-height:30px;font-size:20px;color:#bbbbbb;font-family:'Liberation Mono',monospace;font-weight:400;">[-2.26221453</div><div class="a t" style="left:108px;top:777.5px;line-height:30px;font-size:20px;color:#bbbbbb;font-family:'Liberation Mono',monospace;font-weight:400;">[-2.2075877</div><div class="a t" style="left:108px;top:810.5px;line-height:30px;font-size:20px;color:#bbbbbb;font-family:'Liberation Mono',monospace;font-weight:400;">[-2.19034951</div><div class="a t" style="left:108px;top:843.6px;line-height:30px;font-size:20px;color:#bbbbbb;font-family:'Liberation Mono',monospace;font-weight:400;">[-1.898572</div><div class="a t" style="left:108px;top:876.6px;line-height:30px;font-size:20px;color:#bbbbbb;font-family:'Liberation Mono',monospace;font-weight:400;">[-2.34336905</div><div class="a t" style="left:108px;top:909.7px;line-height:30px;font-size:20px;color:#bbbbbb;font-family:'Liberation Mono',monospace;font-weight:400;">[-1.914323</div><div class="a t" style="left:108px;top:942.8px;line-height:30px;font-size:20px;color:#bbbbbb;font-family:'Liberation Mono',monospace;font-weight:400;">[-2.20701284</div><div class="a t" style="left:108px;top:975.8px;line-height:30px;font-size:20px;color:#bbbbbb;font-family:'Liberation Mono',monospace;font-weight:400;">[-2.7743447</div><div class="a t" style="left:108px;top:1008.8px;line-height:30px;font-size:20px;color:#bbbbbb;font-family:'Liberation Mono',monospace;font-weight:400;">[-1.81866953</div><div class="a" style="left:1892px;top:905px;width:8px;height:30px;background:#4b4d4f;"></div><svg class="a" style="left:32px;top:1045px;" width="12" height="14" viewBox="0 0 12 14"><path d="M2 1v12M2 4c5 0 8 2 8 7" stroke="#9a9c9e" stroke-width="1.5" fill="none"/></svg><div class="a t" style="left:48px;top:1043.0px;line-height:18px;font-size:12px;color:#9a9c9e;font-family:'Liberation Sans',sans-serif;font-weight:400;">Version Control</div><div class="a" style="left:140px;top:1041px;width:55px;height:21px;background:#2f3031;"></div><svg class="a" style="left:151px;top:1046px;" width="11" height="11" viewBox="0 0 11 11"><path d="M1 1l9 4.5L1 10z" fill="#b9bbbd"/></svg><div class="a t" style="left:166px;top:1043.0px;line-height:18px;font-size:12px;color:#bbbbbb;font-family:'Liberation Sans',sans-serif;font-weight:400;">Run</div><svg class="a" style="left:210px;top:1045px;" width="14" height="13" viewBox="0 0 14 13"><circle cx="7" cy="6" r="5" fill="#9a9c9e"/><rect x="2" y="10" width="10" height="3" fill="#9a9c9e"/></svg><div class="a t" style="left:227px;top:1043.0px;line-height:18px;font-size:12px;color:#9a9c9e;font-family:'Liberation Sans',sans-serif;font-weight:400;">Python P</div><div class="a t" style="left:1590px;top:1062.0px;line-height:18px;font-size:12px;color:#9a9c9e;font-family:'Liberation Sans',sans-serif;font-weight:400;">CRLF</div><div class="a t" style="left:1630px;top:1062.0px;line-height:18px;font-size:12.5px;color:#9a9c9e;font-family:'Liberation Sans',sans-serif;font-weight:400;">UTF-8</div><div class="a t" style="left:1677px;top:1061.5px;line-height:19px;font-size:13px;color:#9a9c9e;font-family:'Liberation Sans',sans-serif;font-weight:400;">4 spaces</div><div class="a t" style="left:1739px;top:1061.5px;line-height:19px;font-size:13px;color:#9a9c9e;font-family:'Liberation Sans',sans-serif;font-weight:400;">Python 3.11 (sklearnPro2)</div><svg class="a" style="left:1898px;top:1064px;" width="14" height="14" viewBox="0 0 14 14"><rect x="2" y="6" width="10" height="7" fill="#b9bbbd"/><path d="M4 6V4a3 3 0 0 1 6 0" stroke="#b9bbbd" stroke-width="1.5" fill="none"/></svg><div class="a t" style="left:1722px;top:1046.0px;line-height:22px;font-size:19px;color:#ff0808;font-family:'Liberation Serif',serif;font-weight:700;font-style:italic;letter-spacing:2.3px;-webkit-text-stroke:0.7px #ff0808">www.java1234.com</div><svg class="a" style="left:1804px;top:971px;" width="54" height="54" viewBox="0 0 54 54"><defs><linearGradient id="tg" x1="0" y1="0" x2="0" y2="1"><stop offset="0" stop-color="#2f86f0"/><stop offset="0.6" stop-color="#3a9af5"/><stop offset="1" stop-color="#7fd4ff"/></linearGradient></defs><circle cx="27" cy="27" r="25" fill="url(#tg)" stroke="#e8f4ff" stroke-width="2.5"/><text x="27" y="31" text-anchor="middle" font-family="Liberation Sans" font-size="12" fill="#d8ecff">02:33</text></svg><div class="a" style="left:275px;top:448px;width:787px;height:632px;background:#4a4a4c;border:1px solid #515355;border-bottom:none;box-shadow:4px 2px 6px rgba(0,0,0,0.35)"></div><div class="a" style="left:276px;top:449px;width:778px;height:29px;background:#58595b;"></div><div class="a" style="left:1054px;top:449px;width:7px;height:613px;background:#5e5e60;"></div><div class="a" style="left:0;top:0;width:1920px;height:1062px;overflow:hidden"><svg class="a" style="left:282px;top:456px;" width="15" height="15" viewBox="0 0 15 15"><circle cx="7.5" cy="7.5" r="6.5" fill="#e5a93b"/><path d="M5 5l2.5 5 2.5-5" stroke="#6b4a10" stroke-width="1.6" fill="none"/></svg><div class="a t" style="left:303px;top:451.3px;line-height:28px;font-size:20px;color:#c5c5c5;font-family:'Liberation Mono',monospace;font-weight:400;"><span style="color:#589df6">L</span></div><svg class="a" style="left:282px;top:485px;" width="15" height="15" viewBox="0 0 15 15"><circle cx="7.5" cy="7.5" r="6.5" fill="#40a6d6"/><path d="M10 5.2a3 3 0 1 0 0 4.6" stroke="#1d4f6b" stroke-width="1.6" fill="none"/></svg><div class="a t" style="left:303px;top:480.4px;line-height:28px;font-size:20px;color:#c5c5c5;font-family:'Liberation Mono',monospace;font-weight:400;"><span style="color:#589df6">L</span>inearDiscriminantAnalysis</div><div class="a t" style="right:869px;top:480.4px;line-height:28px;font-size:20px;color:#9a9a9a;font-family:'Liberation Mono',monospace;font-weight:400;text-align:right;">sklearn.discriminant_analysis</div><svg class="a" style="left:282px;top:514px;" width="15" height="15" viewBox="0 0 15 15"><circle cx="7.5" cy="7.5" r="6.5" fill="#40a6d6"/><path d="M10 5.2a3 3 0 1 0 0 4.6" stroke="#1d4f6b" stroke-width="1.6" fill="none"/></svg><div class="a t" style="left:303px;top:509.5px;line-height:28px;font-size:20px;color:#c5c5c5;font-family:'Liberation Mono',monospace;font-weight:400;"><span style="color:#589df6">L</span>ookupError</div><div class="a t" style="right:869px;top:509.5px;line-height:28px;font-size:20px;color:#9a9a9a;font-family:'Liberation Mono',monospace;font-weight:400;text-align:right;">builtins</div><svg class="a" style="left:282px;top:543px;" width="15" height="15" viewBox="0 0 15 15"><circle cx="7.5" cy="7.5" r="6.5" fill="#e5a93b"/><path d="M5 5l2.5 5 2.5-5" stroke="#6b4a10" stroke-width="1.6" fill="none"/></svg><div class="a t" style="left:303px;top:538.6px;line-height:28px;font-size:20px;color:#c5c5c5;font-family:'Liberation Mono',monospace;font-weight:400;">X_sca<span style="color:#589df6">l</span>er</div><div class="a t" style="left:303px;top:567.7px;line-height:28px;font-size:20px;color:#c5c5c5;font-family:'Liberation Mono',monospace;font-weight:700;">Fa<span style="color:#589df6">l</span>se</div><svg class="a" style="left:282px;top:601px;" width="15" height="15" viewBox="0 0 15 15"><circle cx="7.5" cy="7.5" r="6.5" fill="#40a6d6"/><path d="M10 5.2a3 3 0 1 0 0 4.6" stroke="#1d4f6b" stroke-width="1.6" fill="none"/></svg><div class="a t" style="left:303px;top:596.8px;line-height:28px;font-size:20px;color:#c5c5c5;font-family:'Liberation Mono',monospace;font-weight:400;">Process<span style="color:#589df6">L</span>ookupError</div><div class="a t" style="right:869px;top:596.8px;line-height:28px;font-size:20px;color:#9a9a9a;font-family:'Liberation Mono',monospace;font-weight:400;text-align:right;">builtins</div><svg class="a" style="left:282px;top:630px;" width="15" height="15" viewBox="0 0 15 15"><circle cx="7.5" cy="7.5" r="6.5" fill="#40a6d6"/><path d="M10 5.2a3 3 0 1 0 0 4.6" stroke="#1d4f6b" stroke-width="1.6" fill="none"/></svg><div class="a t" style="left:303px;top:625.9px;line-height:28px;font-size:20px;color:#c5c5c5;font-family:'Liberation Mono',monospace;font-weight:400;">Unbound<span style="color:#589df6">L</span>ocalError</div><div class="a t" style="right:869px;top:625.9px;line-height:28px;font-size:20px;color:#9a9a9a;font-family:'Liberation Mono',monospace;font-weight:400;text-align:right;">builtins</div><svg class="a" style="left:282px;top:660px;" width="15" height="15" viewBox="0 0 15 15"><circle cx="7.5" cy="7.5" r="6.5" fill="#40a6d6"/><path d="M10 5.2a3 3 0 1 0 0 4.6" stroke="#1d4f6b" stroke-width="1.6" fill="none"/></svg><div class="a t" style="left:303px;top:655.0px;line-height:28px;font-size:20px;color:#c5c5c5;font-family:'Liberation Mono',monospace;font-weight:400;">B<span style="color:#589df6">l</span>ockingIOError</div><div class="a t" style="right:869px;top:655.0px;line-height:28px;font-size:20px;color:#9a9a9a;font-family:'Liberation Mono',monospace;font-weight:400;text-align:right;">builtins</div><svg class="a" style="left:282px;top:689px;" width="15" height="15" viewBox="0 0 15 15"><circle cx="7.5" cy="7.5" r="6.5" fill="#40a6d6"/><path d="M10 5.2a3 3 0 1 0 0 4.6" stroke="#1d4f6b" stroke-width="1.6" fill="none"/></svg><div class="a t" style="left:303px;top:684.1px;line-height:28px;font-size:20px;color:#c5c5c5;font-family:'Liberation Mono',monospace;font-weight:400;">Chi<span style="color:#589df6">l</span>dProcessError</div><div class="a t" style="right:869px;top:684.1px;line-height:28px;font-size:20px;color:#9a9a9a;font-family:'Liberation Mono',monospace;font-weight:400;text-align:right;">builtins</div><svg class="a" style="left:282px;top:718px;" width="15" height="15" viewBox="0 0 15 15"><circle cx="7.5" cy="7.5" r="6.5" fill="#e5a93b"/><path d="M5 5l2.5 5 2.5-5" stroke="#6b4a10" stroke-width="1.6" fill="none"/></svg><div class="a t" style="left:303px;top:713.2px;line-height:28px;font-size:20px;color:#c5c5c5;font-family:'Liberation Mono',monospace;font-weight:400;">E<span style="color:#589df6">l</span>lipsis</div><div class="a t" style="right:869px;top:713.2px;line-height:28px;font-size:20px;color:#9a9a9a;font-family:'Liberation Mono',monospace;font-weight:400;text-align:right;">builtins</div><svg class="a" style="left:282px;top:747px;" width="15" height="15" viewBox="0 0 15 15"><circle cx="7.5" cy="7.5" r="6.5" fill="#40a6d6"/><path d="M10 5.2a3 3 0 1 0 0 4.6" stroke="#1d4f6b" stroke-width="1.6" fill="none"/></svg><div class="a t" style="left:303px;top:742.3px;line-height:28px;font-size:20px;color:#c5c5c5;font-family:'Liberation Mono',monospace;font-weight:400;">Fi<span style="color:#589df6">l</span>eExistsError</div><div class="a t" style="right:869px;top:742.3px;line-height:28px;font-size:20px;color:#9a9a9a;font-family:'Liberation Mono',monospace;font-weight:400;text-align:right;">builtins</div><svg class="a" style="left:282px;top:776px;" width="15" height="15" viewBox="0 0 15 15"><circle cx="7.5" cy="7.5" r="6.5" fill="#40a6d6"/><path d="M10 5.2a3 3 0 1 0 0 4.6" stroke="#1d4f6b" stroke-width="1.6" fill="none"/></svg><div class="a t" style="left:303px;top:771.4px;line-height:28px;font-size:20px;color:#c5c5c5;font-family:'Liberation Mono',monospace;font-weight:400;">Fi<span style="color:#589df6">l</span>eNotFoundError</div><div class="a t" style="right:869px;top:771.4px;line-height:28px;font-size:20px;color:#9a9a9a;font-family:'Liberation Mono',monospace;font-weight:400;text-align:right;">builtins</div><svg class="a" style="left:282px;top:805px;" width="15" height="15" viewBox="0 0 15 15"><circle cx="7.5" cy="7.5" r="6.5" fill="#40a6d6"/><path d="M10 5.2a3 3 0 1 0 0 4.6" stroke="#1d4f6b" stroke-width="1.6" fill="none"/></svg><div class="a t" style="left:303px;top:800.5px;line-height:28px;font-size:20px;color:#c5c5c5;font-family:'Liberation Mono',monospace;font-weight:400;">F<span style="color:#589df6">l</span>oatingPointError</div><div class="a t" style="right:869px;top:800.5px;line-height:28px;font-size:20px;color:#9a9a9a;font-family:'Liberation Mono',monospace;font-weight:400;text-align:right;">builtins</div><svg class="a" style="left:282px;top:834px;" width="15" height="15" viewBox="0 0 15 15"><circle cx="7.5" cy="7.5" r="6.5" fill="#40a6d6"/><path d="M10 5.2a3 3 0 1 0 0 4.6" stroke="#1d4f6b" stroke-width="1.6" fill="none"/></svg><div class="a t" style="left:303px;top:829.6px;line-height:28px;font-size:20px;color:#c5c5c5;font-family:'Liberation Mono',monospace;font-weight:400;">Modu<span style="color:#589df6">l</span>eNotFoundError</div><div class="a t" style="right:869px;top:829.6px;line-height:28px;font-size:20px;color:#9a9a9a;font-family:'Liberation Mono',monospace;font-weight:400;text-align:right;">builtins</div><svg class="a" style="left:282px;top:863px;" width="15" height="15" viewBox="0 0 15 15"><circle cx="7.5" cy="7.5" r="6.5" fill="#e5a93b"/><path d="M5 5l2.5 5 2.5-5" stroke="#6b4a10" stroke-width="1.6" fill="none"/></svg><div class="a t" style="left:303px;top:858.7px;line-height:28px;font-size:20px;color:#c5c5c5;font-family:'Liberation Mono',monospace;font-weight:400;">NotImp<span style="color:#589df6">l</span>emented</div><div class="a t" style="right:869px;top:858.7px;line-height:28px;font-size:20px;color:#9a9a9a;font-family:'Liberation Mono',monospace;font-weight:400;text-align:right;">builtins</div><svg class="a" style="left:282px;top:892px;" width="15" height="15" viewBox="0 0 15 15"><circle cx="7.5" cy="7.5" r="6.5" fill="#40a6d6"/><path d="M10 5.2a3 3 0 1 0 0 4.6" stroke="#1d4f6b" stroke-width="1.6" fill="none"/></svg><div class="a t" style="left:303px;top:887.8px;line-height:28px;font-size:20px;color:#c5c5c5;font-family:'Liberation Mono',monospace;font-weight:400;">NotImp<span style="color:#589df6">l</span>ementedError</div><div class="a t" style="right:869px;top:887.8px;line-height:28px;font-size:20px;color:#9a9a9a;font-family:'Liberation Mono',monospace;font-weight:400;text-align:right;">builtins</div><svg class="a" style="left:282px;top:921px;" width="15" height="15" viewBox="0 0 15 15"><circle cx="7.5" cy="7.5" r="6.5" fill="#40a6d6"/><path d="M10 5.2a3 3 0 1 0 0 4.6" stroke="#1d4f6b" stroke-width="1.6" fill="none"/></svg><div class="a t" style="left:303px;top:916.9px;line-height:28px;font-size:20px;color:#c5c5c5;font-family:'Liberation Mono',monospace;font-weight:400;">Overf<span style="color:#589df6">l</span>owError</div><div class="a t" style="right:869px;top:916.9px;line-height:28px;font-size:20px;color:#9a9a9a;font-family:'Liberation Mono',monospace;font-weight:400;text-align:right;">builtins</div><svg class="a" style="left:282px;top:951px;" width="15" height="15" viewBox="0 0 15 15"><circle cx="7.5" cy="7.5" r="6.5" fill="#40a6d6"/><path d="M10 5.2a3 3 0 1 0 0 4.6" stroke="#1d4f6b" stroke-width="1.6" fill="none"/></svg><div class="a t" style="left:303px;top:946.0px;line-height:28px;font-size:20px;color:#c5c5c5;font-family:'Liberation Mono',monospace;font-weight:400;">UnicodeTrans<span style="color:#589df6">l</span>ateError</div><div class="a t" style="right:869px;top:946.0px;line-height:28px;font-size:20px;color:#9a9a9a;font-family:'Liberation Mono',monospace;font-weight:400;text-align:right;">builtins</div><svg class="a" style="left:282px;top:980px;" width="15" height="15" viewBox="0 0 15 15"><circle cx="7.5" cy="7.5" r="6.5" fill="#40a6d6"/><path d="M10 5.2a3 3 0 1 0 0 4.6" stroke="#1d4f6b" stroke-width="1.6" fill="none"/></svg><div class="a t" style="left:303px;top:975.1px;line-height:28px;font-size:20px;color:#c5c5c5;font-family:'Liberation Mono',monospace;font-weight:400;">Va<span style="color:#589df6">l</span>ueError</div><div class="a t" style="right:869px;top:975.1px;line-height:28px;font-size:20px;color:#9a9a9a;font-family:'Liberation Mono',monospace;font-weight:400;text-align:right;">builtins</div><svg class="a" style="left:282px;top:1009px;" width="15" height="15" viewBox="0 0 15 15"><circle cx="7.5" cy="7.5" r="6.5" fill="#40a6d6"/><path d="M10 5.2a3 3 0 1 0 0 4.6" stroke="#1d4f6b" stroke-width="1.6" fill="none"/></svg><div class="a t" style="left:303px;top:1004.2px;line-height:28px;font-size:20px;color:#c5c5c5;font-family:'Liberation Mono',monospace;font-weight:400;">Se<span style="color:#589df6">l</span>ectKBest</div><div class="a t" style="right:869px;top:1004.2px;line-height:28px;font-size:20px;color:#9a9a9a;font-family:'Liberation Mono',monospace;font-weight:400;text-align:right;">sklearn.feature_selection._univariate_selection</div><svg class="a" style="left:282px;top:1038px;" width="15" height="15" viewBox="0 0 15 15"><circle cx="7.5" cy="7.5" r="6.5" fill="#40a6d6"/><path d="M10 5.2a3 3 0 1 0 0 4.6" stroke="#1d4f6b" stroke-width="1.6" fill="none"/></svg><div class="a t" style="left:303px;top:1033.3px;line-height:28px;font-size:20px;color:#c5c5c5;font-family:'Liberation Mono',monospace;font-weight:400;">StandardSca<span style="color:#589df6">l</span>er</div><div class="a t" style="right:869px;top:1033.3px;line-height:28px;font-size:20px;color:#9a9a9a;font-family:'Liberation Mono',monospace;font-weight:400;text-align:right;">sklearn.preprocessing._data</div></div><div class="a t" style="left:287px;top:1064.0px;line-height:14px;font-size:12px;color:#606264;font-family:'Liberation Sans',sans-serif;font-weight:400;letter-spacing:0.2px">Ctrl+Down and Ctrl+Up will move caret down and up in the editor</div><div class="a t" style="left:653px;top:1064.0px;line-height:14px;font-size:11px;color:#589df6;font-family:'Liberation Sans',sans-serif;font-weight:400;">Next Tip</div><svg class="a" style="left:1049px;top:1064px;" width="6" height="15" viewBox="0 0 6 15"><circle cx="3" cy="3" r="1.2" fill="#8c8e90"/><circle cx="3" cy="7.5" r="1.2" fill="#8c8e90"/><circle cx="3" cy="12" r="1.2" fill="#8c8e90"/></svg></div></body></html>
